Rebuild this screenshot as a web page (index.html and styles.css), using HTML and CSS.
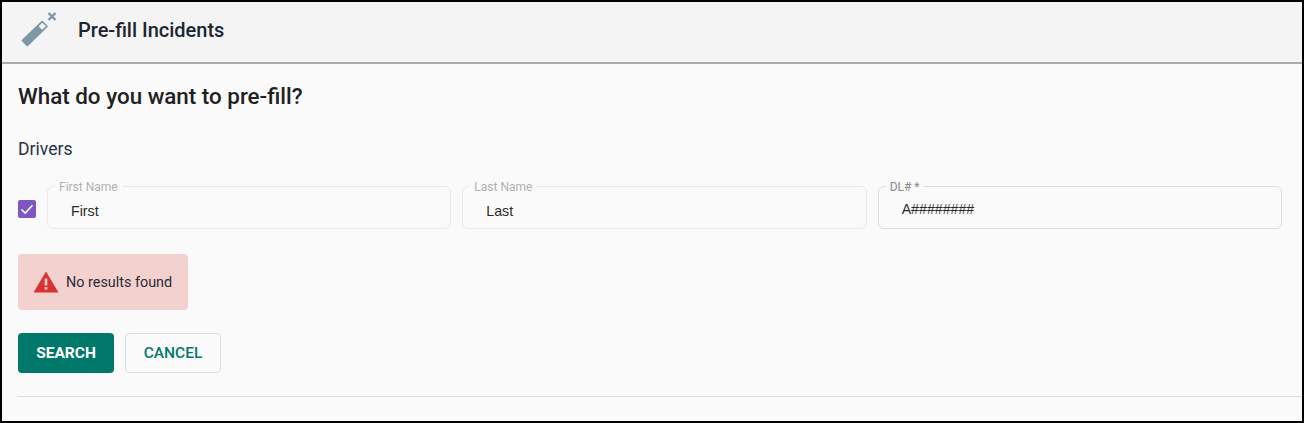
FILE: index.html

```html
<!DOCTYPE html>
<html lang="en">
<head>
  <meta charset="UTF-8">
  <title>Pre-fill Incidents</title>
  <link rel="stylesheet" href="styles.css">
</head>
<body>
  <div class="frame">
    <header class="header">
      <svg class="wand" width="40" height="40" viewBox="0 0 40 40">
        <g transform="translate(16.7 23.5) rotate(46)">
          <rect x="-4.3" y="-14.5" width="8.6" height="29" rx="1" fill="#7d97a5"/>
          <rect x="-2.5" y="-13" width="5" height="5" fill="#f4f4f4"/>
        </g>
        <path d="M30.5 3l7 7M37.5 3l-7 7" stroke="#7d97a5" stroke-width="2.4" fill="none"/>
      </svg>
      <h2 class="header-title">Pre-fill Incidents</h2>
    </header>
    <main class="content">
      <h1 class="question">What do you want to pre-fill?</h1>
      <div class="section-label">Drivers</div>
      <div class="driver-row">
        <span class="checkbox">
          <svg width="18" height="18" viewBox="0 0 18 18"><path d="M3.5 9.5l3.7 3.5 7.3-7.8" stroke="#fff" stroke-width="1.6" fill="none"/></svg>
        </span>
        <fieldset class="field">
          <legend>First Name</legend>
          <span class="value">First</span>
        </fieldset>
        <fieldset class="field">
          <legend>Last Name</legend>
          <span class="value">Last</span>
        </fieldset>
        <fieldset class="field field-required">
          <legend>DL# *</legend>
          <span class="value">A########</span>
        </fieldset>
      </div>
      <div class="alert">
        <svg width="26" height="22" viewBox="0 0 26 22">
          <path d="M13 0.5L25.5 21.5H0.5z" fill="#d83232"/>
          <rect x="11.7" y="7.5" width="2.6" height="7" fill="#f4d2d0"/>
          <rect x="11.7" y="16" width="2.6" height="2.6" fill="#f4d2d0"/>
        </svg>
        <span>No results found</span>
      </div>
      <div class="actions">
        <button class="btn btn-primary">SEARCH</button>
        <button class="btn btn-outline">CANCEL</button>
      </div>
      <div class="divider"></div>
    </main>
  </div>
</body>
</html>
```

FILE: styles.css

```css
* {
  box-sizing: border-box;
}
html, body {
  margin: 0;
  height: 100%;
}
body {
  background-color: #fafafa;
  color: #212121;
  font-family: Roboto, 'Liberation Sans', sans-serif;
}
.frame {
  height: 423px;
  border: 2px solid #000;
  overflow: hidden;
}
.header {
  display: flex;
  align-items: center;
  height: 62px;
  padding-left: 16px;
  padding-bottom: 4px;
  background-color: #f4f4f4;
  border-bottom: 2px solid #ababab;
}
.wand {
  margin-right: 20px;
}
.header-title {
  margin: 0;
  font-size: 20px;
  font-weight: 500;
  color: #1c2530;
}
.content {
  padding-left: 16px;
}
.question {
  margin: 18px 0 0;
  font-size: 22.4px;
  line-height: 28px;
  font-weight: 500;
  color: #212121;
}
.section-label {
  margin-top: 29px;
  font-size: 17.6px;
  line-height: 20px;
  color: #263248;
}
.driver-row {
  display: flex;
  align-items: center;
  gap: 11px;
  margin-top: 27px;
  padding-right: 20px;
}
.checkbox {
  flex: none;
  width: 18px;
  height: 18px;
  margin-top: 2px;
  border-radius: 2px;
  background-color: #7e57c2;
}
.checkbox svg {
  display: block;
}
.field {
  flex: 1;
  min-width: 0;
  height: 48px;
  margin: -5px 0 0;
  padding: 0 0 0 23px;
  border: 1px solid #eaeaea;
  border-radius: 6px;
}
.field legend {
  margin-left: -16px;
  padding: 2px 4px 0;
  font-size: 12px;
  line-height: 9px;
  color: #b5b0ae;
}
.value {
  display: block;
  margin-top: 11px;
  font-size: 14.2px;
  line-height: 16px;
  color: #2a2a2a;
  font-family: 'Liberation Sans', sans-serif;
}
.field-required {
  border-color: #dcdcdc;
}
.field-required legend {
  color: #8a8a8a;
}
.field-required .value {
  margin-top: 9px;
}
.alert {
  display: inline-flex;
  align-items: center;
  gap: 7px;
  height: 56px;
  margin-top: 25px;
  padding: 0 15px 0 15px;
  width: 170px;
  border-radius: 4px;
  background-color: #f3d1cf;
  font-size: 14.4px;
  color: #2b2b38;
}
.actions {
  display: flex;
  gap: 11px;
  margin-top: 23px;
}
.btn {
  width: 96px;
  height: 40px;
  padding: 0;
  border-radius: 4px;
  font-family: inherit;
  font-size: 15.5px;
  font-weight: 700;
}
.btn-primary {
  border: none;
  background-color: #00796b;
  color: #fff;
}
.btn-outline {
  border: 1px solid #dedede;
  background-color: #fafafa;
  color: #00796b;
  font-weight: 500;
}
.divider {
  margin-top: 23px;
  border-top: 1px solid #dcdcdc;
}
```
